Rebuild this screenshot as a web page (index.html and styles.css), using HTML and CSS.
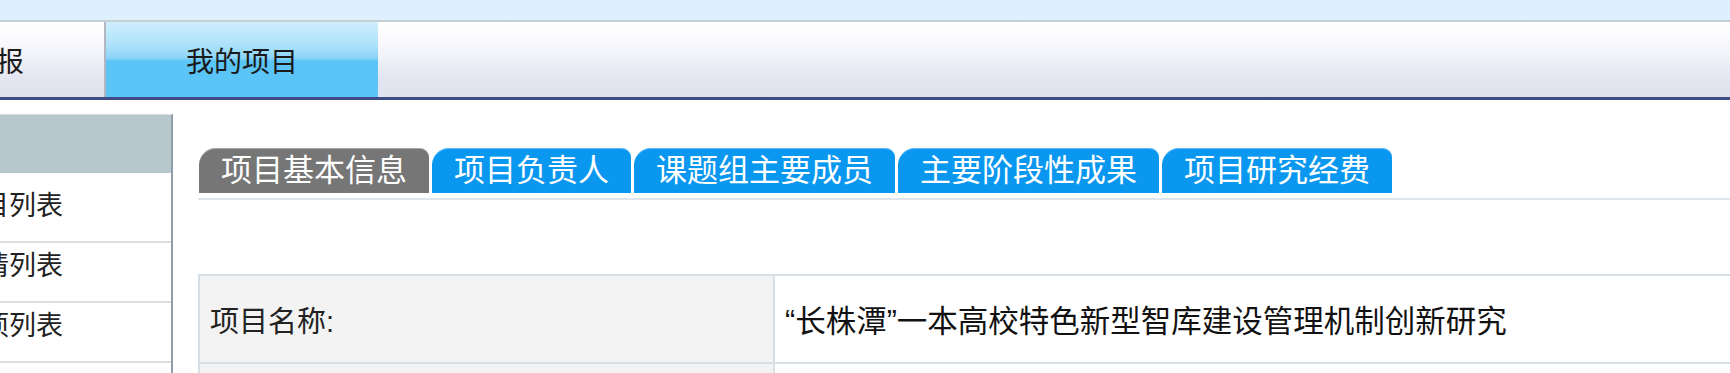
FILE: index.html
```html
<!DOCTYPE html>
<html lang="zh-CN">
<head>
<meta charset="utf-8">
<title>我的项目</title>
<link rel="stylesheet" href="styles.css">
</head>
<body>
<div class="topband"></div>
<div class="nav">
  <div class="nav-items">
    <div class="nav-item">项目申报</div>
    <div class="nav-item active">我的项目</div>
  </div>
</div>
<div class="main">
  <div class="sidebar">
    <div class="side-head"></div>
    <div class="side-item first">项目列表</div>
    <div class="side-item">申请列表</div>
    <div class="side-item">结项列表</div>
    <div class="side-item empty"></div>
  </div>
  <div class="content">
    <div class="tabs">
      <div class="tab current">项目基本信息</div>
      <div class="tab">项目负责人</div>
      <div class="tab">课题组主要成员</div>
      <div class="tab">主要阶段性成果</div>
      <div class="tab">项目研究经费</div>
    </div>
    <table class="info">
      <tr>
        <td class="label">项目名称:</td>
        <td class="value">“长株潭”一本高校特色新型智库建设管理机制创新研究</td>
      </tr>
      <tr>
        <td class="label"></td>
        <td class="value"></td>
      </tr>
    </table>
  </div>
</div>
</body>
</html>
```

FILE: styles.css
```css
* { box-sizing: border-box; }
html, body { margin: 0; padding: 0; }
body {
  width: 1730px;
  height: 373px;
  overflow: hidden;
  background: #fff;
  font-family: "Liberation Sans", "Noto Sans CJK SC", sans-serif;
  color: #222;
}
.topband {
  height: 22px;
  background: #def0fe;
  border-bottom: 2px solid #c4d0d5;
}
.nav {
  height: 78px;
  border-bottom: 3px solid #3e4b84;
  background: linear-gradient(to bottom, #ffffff 0%, #fbfbfe 20%, #f2f3f9 45%, #e3e6f1 75%, #dfe3ee 100%);
}
.nav-items {
  display: flex;
  height: 100%;
  margin-left: -168px;
}
.nav-item {
  width: 274px;
  height: 100%;
  display: flex;
  align-items: center;
  justify-content: center;
  font-size: 28px;
  color: #1a1a1a;
  border-right: 2px solid #b3b7c2;
}
.nav-item.active {
  width: 272px;
  border-right: none;
  background: linear-gradient(to bottom, #cfeefd 0%, #aee2fa 30%, #8dd5f8 48%, #5bc5f7 52%, #5bc5f7 100%);
}
.main {
  display: flex;
  align-items: flex-start;
}
.sidebar {
  margin-left: -60px;
  margin-top: 14px;
  width: 233px;
  flex: none;
  border-top: 1px solid #d9dee1;
  border-right: 2px solid #8e9ea8;
  height: 300px;
}
.side-head {
  height: 58px;
  background: #b8c7ce;
}
.side-item {
  height: 60px;
  padding: 6px 0 0 15px;
  font-size: 27px;
  line-height: 34px;
  color: #222;
  border-bottom: 2px solid #dedede;
}
.side-item.first {
  height: 70px;
  padding-top: 16px;
}
.content {
  flex: 1;
  padding: 48px 0 0 25px;
  min-width: 0;
}
.tabs {
  display: flex;
  gap: 3px;
  padding: 0 0 5px 1px;
  border-bottom: 2px solid #dfe6ec;
}
.tab {
  height: 45px;
  line-height: 45px;
  padding: 0 22px;
  font-size: 31px;
  color: #fff;
  background: #0997ef;
  border-radius: 17px 9px 0 0;
  box-shadow: inset 0 1px 0 rgba(255,255,255,0.35);
  white-space: nowrap;
}
.tab.current {
  background: #767676;
}
.info {
  margin-top: 74px;
  width: 1620px;
  border-collapse: collapse;
  table-layout: fixed;
}
.info td {
  border: 2px solid #d6dfe6;
  height: 88px;
  font-size: 29px;
  vertical-align: middle;
}
.info td.label {
  width: 575px;
  background: #f3f3f3;
  padding-left: 10px;
  color: #222;
}
.info td.value {
  background: #fff;
  padding-left: 10px;
  font-size: 30.5px;
  color: #111;
}
```
